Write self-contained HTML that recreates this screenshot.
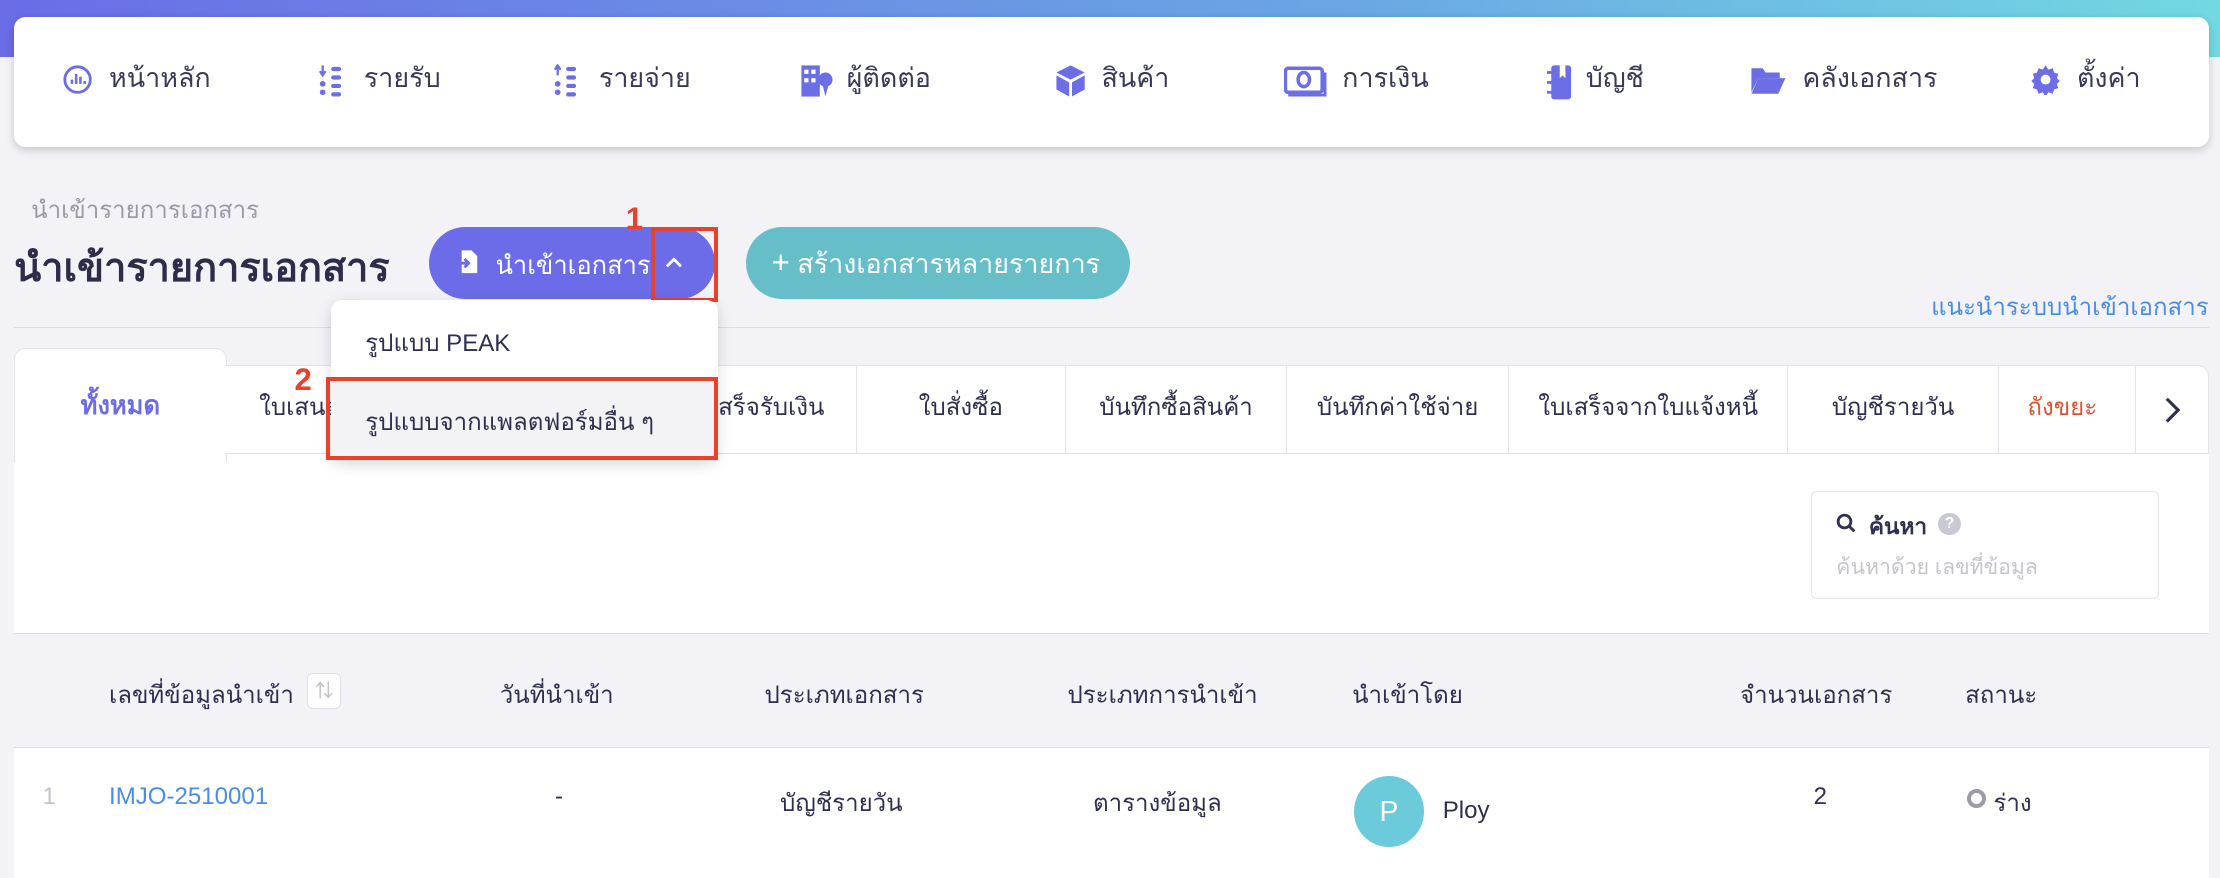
<!DOCTYPE html>
<html><head><meta charset="utf-8">
<style>
html{zoom:1.4158}
*{box-sizing:border-box;margin:0;padding:0}
body{width:1568px;height:617px;overflow:hidden;background:#f3f3f7;font-family:"Liberation Sans","Noto Sans CJK SC",sans-serif;color:#2f2f4f;position:relative}
.abs{position:absolute;white-space:nowrap}
.top{position:absolute;left:0;top:0;width:1568px;height:40px;background:linear-gradient(90deg,#6a6de6,#6aa6e4 60%,#72d8e2)}
.nav{position:absolute;left:10px;top:12px;width:1550px;height:92px;background:#fff;border-radius:8px;box-shadow:0 2px 6px rgba(0,0,0,.18)}
.ni{position:absolute;top:44px;font-size:19px;color:#3a3a58;line-height:24px}
.ni svg{position:absolute;left:-33px;top:1px}
.tab{position:absolute;top:258px;height:63px;background:#fff;border-right:1px solid #e3e3ea;border-top:1px solid #e0e0e8;border-bottom:1px solid #e0e0e8;font-size:17px;color:#2f2f4f;text-align:center;line-height:60px}
.th{position:absolute;top:477px;font-size:17px;color:#2f2f4f}
.td{position:absolute;top:553px;font-size:17px;color:#2f2f4f}
</style></head><body>
<div class="top"></div>
<div class="nav"></div>
<div class="ni" style="left:77px"><svg width="22" height="22" viewBox="0 0 22 22"><circle cx="11" cy="11" r="9" fill="none" stroke="#6c6ee8" stroke-width="2"/><path d="M7 14v-3M10 14V7M13 14V9M16 14v-2" stroke="#6c6ee8" stroke-width="1.8"/></svg>หน้าหลัก</div>
<div class="ni" style="left:257px"><svg width="22" height="24" viewBox="0 0 22 24"><path d="M4 1v6M2 5l2 3 2-3" stroke="#6c6ee8" stroke-width="1.6" fill="none"/><g fill="#6c6ee8"><circle cx="4" cy="14" r="2"/><circle cx="4" cy="20" r="2"/><rect x="10" y="2" width="7" height="3" rx="1.5"/><rect x="10" y="8" width="7" height="3" rx="1.5"/><rect x="10" y="14" width="7" height="3" rx="1.5"/><rect x="10" y="20" width="7" height="3" rx="1.5"/></g></svg>รายรับ</div>
<div class="ni" style="left:423px"><svg width="22" height="24" viewBox="0 0 22 24"><path d="M4 8V2M2 4l2-3 2 3" stroke="#6c6ee8" stroke-width="1.6" fill="none"/><g fill="#6c6ee8"><circle cx="4" cy="14" r="2"/><circle cx="4" cy="20" r="2"/><rect x="10" y="2" width="7" height="3" rx="1.5"/><rect x="10" y="8" width="7" height="3" rx="1.5"/><rect x="10" y="14" width="7" height="3" rx="1.5"/><rect x="10" y="20" width="7" height="3" rx="1.5"/></g></svg>รายจ่าย</div>
<div class="ni" style="left:598px"><svg width="24" height="24" viewBox="0 0 24 24"><rect x="1" y="1" width="13" height="22" fill="#6c6ee8"/><g fill="#fff"><rect x="3" y="4" width="3" height="3"/><rect x="8" y="4" width="3" height="3"/><rect x="3" y="10" width="3" height="3"/><rect x="8" y="10" width="3" height="3"/></g><circle cx="18" cy="11" r="5" fill="#6c6ee8"/><path d="M16 15l2 8 2-8z" fill="#6c6ee8"/></svg>ผู้ติดต่อ</div>
<div class="ni" style="left:778px"><svg width="22" height="24" viewBox="0 0 22 24"><path d="M11 1l10 5-10 5L1 6z" fill="#6c6ee8"/><path d="M1 8l9 5v10l-9-5zM21 8l-9 5v10l9-5z" fill="#6c6ee8"/></svg>สินค้า</div>
<div class="ni" style="left:948px"><svg width="30" height="24" viewBox="0 0 30 24" style="left:-41px"><rect x="1" y="3" width="26" height="17" rx="2" fill="none" stroke="#6c6ee8" stroke-width="2.5"/><ellipse cx="14" cy="11" rx="4" ry="5" fill="none" stroke="#6c6ee8" stroke-width="2.5"/><path d="M3 22h26V6" stroke="#6c6ee8" stroke-width="2" fill="none"/></svg>การเงิน</div>
<div class="ni" style="left:1120px"><svg width="18" height="26" viewBox="0 0 18 26" style="left:-27px"><rect x="3" y="1" width="14" height="24" rx="2" fill="#6c6ee8"/><path d="M9 1v9l2-2 2 2V1" fill="#fff"/><rect x="0" y="5" width="4" height="2" fill="#6c6ee8"/><rect x="0" y="12" width="4" height="2" fill="#6c6ee8"/><rect x="0" y="19" width="4" height="2" fill="#6c6ee8"/></svg>บัญชี</div>
<div class="ni" style="left:1273px"><svg width="26" height="22" viewBox="0 0 26 22" style="left:-37px"><path d="M1 3h8l2 3h10v4H6L1 20z" fill="#6c6ee8"/><path d="M6 10h19l-5 11H1z" fill="#6c6ee8"/></svg>คลังเอกสาร</div>
<div class="ni" style="left:1467px"><svg width="22" height="22" viewBox="0 0 22 22"><path d="M11 1l2 3 3-1 1 3 3 1-1 3 2 2-2 2 1 3-3 1-1 3-3-1-2 3-2-3-3 1-1-3-3-1 1-3-2-2 2-2-1-3 3-1 1-3 3 1z" fill="#6c6ee8"/><circle cx="11" cy="11" r="3.5" fill="#fff"/></svg>ตั้งค่า</div>

<div class="abs" style="left:22px;top:134px;font-size:17px;color:#9a9aa6">นำเข้ารายการเอกสาร</div>
<div class="abs" style="left:10px;top:167px;font-size:28px;font-weight:bold;color:#2d2d4a">นำเข้ารายการเอกสาร</div>

<div class="abs" style="left:303px;top:160px;width:202px;height:51px;border-radius:26px;background:#6c6ce8"></div>
<svg class="abs" style="left:322px;top:176px" width="16" height="18" viewBox="0 0 16 18"><path d="M4 1h7l4 4v12H4z" fill="#fff"/><path d="M1 10h8M6 7l3 3-3 3" stroke="#6c6ce8" stroke-width="2" fill="none"/></svg>
<div class="abs" style="left:350px;top:174px;font-size:18px;color:#fff">นำเข้าเอกสาร</div>
<svg class="abs" style="left:469px;top:180px" width="14" height="10" viewBox="0 0 14 10"><path d="M2 8l5-5 5 5" stroke="#fff" stroke-width="2" fill="none"/></svg>
<div class="abs" style="left:460px;top:160px;width:47px;height:53px;border:3px solid #e8412c"></div>
<div class="abs" style="left:442px;top:142px;font-size:22px;font-weight:bold;color:#e8412c">1</div>

<div class="abs" style="left:527px;top:160px;width:271px;height:51px;border-radius:26px;background:#66bfc8;color:#fff;font-size:19px;line-height:51px;padding-left:18px"><span style="font-size:22px">+</span> สร้างเอกสารหลายรายการ</div>

<div class="abs" style="right:8px;top:203px;font-size:17px;color:#4a8de6">แนะนำระบบนำเข้าเอกสาร</div>
<div class="abs" style="left:10px;top:231px;width:1550px;height:1px;background:#dcdce4"></div>

<div class="abs" style="left:10px;top:320px;width:1550px;height:300px;background:#fff"></div>
<div class="abs" style="left:10px;top:246px;width:150px;height:80px;background:#fff;border:1px solid #e3e3ea;border-bottom:none;border-radius:8px 8px 0 0;text-align:center;padding-top:26px;font-size:18px;font-weight:bold;color:#6c6ce8">ทั้งหมด</div>
<div class="tab" style="left:159px;width:170px;text-align:left;padding-left:24px">ใบเสนอราคา</div>
<div class="tab" style="left:329px;width:276px;text-align:right;padding-right:22px">ใบเสร็จรับเงิน</div>
<div class="tab" style="left:605px;width:148px">ใบสั่งซื้อ</div>
<div class="tab" style="left:753px;width:156px">บันทึกซื้อสินค้า</div>
<div class="tab" style="left:909px;width:157px">บันทึกค่าใช้จ่าย</div>
<div class="tab" style="left:1066px;width:197px">ใบเสร็จจากใบแจ้งหนี้</div>
<div class="tab" style="left:1263px;width:149px">บัญชีรายวัน</div>
<div class="tab" style="left:1412px;width:97px;color:#e0512f;overflow:hidden;text-align:left;padding-left:20px">ถังขยะ</div>
<div class="tab" style="left:1509px;width:51px;border-right:1px solid #e3e3ea;border-radius:0 8px 0 0"><svg width="12" height="20" viewBox="0 0 12 20" style="margin-top:21px"><path d="M2 2l8 8-8 8" stroke="#2f2f4f" stroke-width="2.2" fill="none"/></svg></div>

<div class="abs" style="left:1279px;top:347px;width:246px;height:76px;border:1px solid #e3e3e8;border-radius:4px"></div>
<svg class="abs" style="left:1297px;top:362px" width="14" height="14" viewBox="0 0 14 14"><circle cx="6" cy="6" r="4.5" fill="none" stroke="#2f2f4f" stroke-width="2"/><path d="M9 9l4 4" stroke="#2f2f4f" stroke-width="2"/></svg>
<div class="abs" style="left:1320px;top:359px;font-size:16px;font-weight:bold;color:#2f2f4f">ค้นหา</div>
<div class="abs" style="left:1369px;top:362px;width:16px;height:16px;border-radius:50%;background:#c9c9d4;color:#fff;font-size:11px;text-align:center;line-height:16px;font-weight:bold">?</div>
<div class="abs" style="left:1297px;top:389px;font-size:15px;color:#c4c4cc">ค้นหาด้วย เลขที่ข้อมูล</div>

<div class="abs" style="left:10px;top:447px;width:1550px;height:81px;background:#f3f3f7;border-top:1px solid #dcdce4;border-bottom:1px solid #dcdce4"></div>
<div class="th" style="left:77px">เลขที่ข้อมูลนำเข้า</div>
<div class="abs" style="left:217px;top:475px;width:24px;height:26px;border:1px solid #e0e0e6;border-radius:4px;background:#fff;color:#bbb;font-size:13px;text-align:center;line-height:24px">⇅</div>
<div class="th" style="left:353px">วันที่นำเข้า</div>
<div class="th" style="left:540px">ประเภทเอกสาร</div>
<div class="th" style="left:754px">ประเภทการนำเข้า</div>
<div class="th" style="left:955px">นำเข้าโดย</div>
<div class="th" style="left:1229px">จำนวนเอกสาร</div>
<div class="th" style="left:1388px">สถานะ</div>

<div class="td" style="left:30px;color:#c4c4cc">1</div>
<div class="td" style="left:77px;color:#4a8de6">IMJO-2510001</div>
<div class="td" style="left:392px">-</div>
<div class="td" style="left:551px">บัญชีรายวัน</div>
<div class="td" style="left:772px">ตารางข้อมูล</div>
<div class="abs" style="left:956px;top:548px;width:50px;height:50px;border-radius:50%;background:#6ccbdb;color:#fff;font-size:20px;text-align:center;line-height:50px">P</div>
<div class="td" style="left:1019px;top:563px">Ploy</div>
<div class="td" style="left:1281px">2</div>
<div class="abs" style="left:1389px;top:557px;width:14px;height:14px;border-radius:50%;border:3px solid #9a9aa8"></div>
<div class="td" style="left:1408px">ร่าง</div>

<div class="abs" style="left:234px;top:212px;width:273px;height:113px;background:#fff;border-radius:8px;box-shadow:0 3px 10px rgba(0,0,0,.15)"></div>
<div class="abs" style="left:258px;top:228px;font-size:17px;color:#2f2f4f">รูปแบบ PEAK</div>
<div class="abs" style="left:234px;top:268px;width:272px;height:55px;background:#f3f3f6"></div>
<div class="abs" style="left:258px;top:284px;font-size:17px;color:#2f2f4f">รูปแบบจากแพลตฟอร์มอื่น ๆ</div>
<div class="abs" style="left:230px;top:266px;width:277px;height:59px;border:3px solid #e8412c"></div>
<div class="abs" style="left:208px;top:256px;font-size:22px;font-weight:bold;color:#e8412c">2</div>
</body></html>
